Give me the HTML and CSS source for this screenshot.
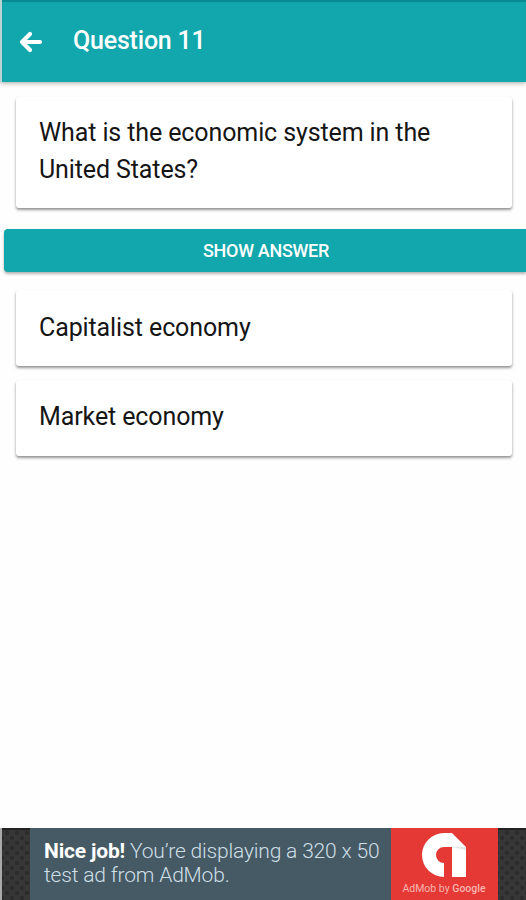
FILE: index.html
```html
<!DOCTYPE html>
<html lang="en">
<head>
    <meta charset="UTF-8">
    <meta name="viewport" content="width=device-width, initial-scale=1.0">
    <title>Question 11</title>
    <link rel="stylesheet" href="styles.css">
</head>
<body>
    <header class="toolbar">
        <a class="back" href="#" aria-label="Back">
            <svg width="24" height="24" viewBox="0 0 24 24">
                <path d="M11 4 L3 12 L11 20 M3.5 12 H21" fill="none" stroke="#fff" stroke-width="4.2" stroke-linecap="round" stroke-linejoin="round"/>
            </svg>
        </a>
        <h1>Question 11</h1>
    </header>

    <main>
        <div class="card question">What is the economic system in the United States?</div>
        <button class="show-answer" type="button">Show answer</button>
        <div class="card">Capitalist economy</div>
        <div class="card">Market economy</div>
    </main>

    <footer class="ad">
        <div class="ad-text">
            <p><b>Nice job!</b> You’re displaying a 320 x 50</p>
            <p>test ad from AdMob.</p>
        </div>
        <div class="ad-logo">
            <svg width="46" height="46" viewBox="0 0 46 46">
                <path d="M23 1 H31 L45 15 V45 H31 V15 H23 A8 8 0 0 0 23 31 V45 A22 22 0 0 1 23 1 Z" fill="#fff"/>
                <path d="M31 15 H45 V18 Z" fill="#e4e4e4"/>
            </svg>
            <span>AdMob by <b>Google</b></span>
        </div>
    </footer>
</body>
</html>
```

FILE: styles.css
```css
* {
    box-sizing: border-box;
}

body {
    display: flex;
    flex-direction: column;
    height: 100vh;
    margin: 0;
    overflow: hidden;
    background-color: #fefefe;
    font-family: Roboto, sans-serif;
    color: #151515;
}

.toolbar {
    display: flex;
    align-items: center;
    height: 82px;
    padding-left: 17px;
    border-left: 2px solid #bcd3d5;
    background-color: #12a7ac;
    box-shadow: inset 0 2px 1px #078a91, 0 1px 5px rgba(0, 0, 0, 0.35);
}

.back {
    display: flex;
    margin-top: 2px;
}

h1 {
    margin: 0 0 1px 30px;
    font-size: 25px;
    font-weight: 500;
    letter-spacing: -0.2px;
    color: #fff;
}

main {
    flex: 1;
}

.card {
    height: 76px;
    margin: 0 14px 14px 16px;
    padding: 18px 23px;
    border-radius: 3px;
    background-color: #fff;
    box-shadow: 0 2px 3px rgba(0, 0, 0, 0.4), 0 1px 2px rgba(0, 0, 0, 0.06);
    font-size: 25px;
    line-height: 37px;
    letter-spacing: -0.11px;
}

.question {
    height: 111px;
    margin-top: 15px;
    margin-bottom: 21px;
    padding-top: 17px;
}

.show-answer {
    display: block;
    width: calc(100% - 4px);
    height: 43px;
    margin: 0 0 18px 4px;
    padding: 0 0 0 2px;
    border: none;
    border-radius: 4px 0 0 4px;
    background-color: #12a7ac;
    box-shadow: 0 2px 3px rgba(0, 0, 0, 0.3);
    font-family: inherit;
    font-size: 18px;
    font-weight: 500;
    letter-spacing: -0.3px;
    text-transform: uppercase;
    color: #fff;
}

.show-answer + .card {
    padding-top: 19px;
}

.ad {
    display: flex;
    height: 72px;
    padding: 0 28px;
    border-left: 2px solid #aaa;
    background-color: #373737;
    background-image: radial-gradient(circle, #2c2c2c 1.8px, transparent 2.6px), radial-gradient(circle, #2c2c2c 1.8px, transparent 2.6px);
    background-position: 0 0, 5px 5px;
    background-size: 10px 10px;
    box-shadow: inset 0 2px 1px #222;
}

.ad-text {
    flex: 1;
    padding: 11px 0 0 14px;
    background-color: #455a64;
    font-size: 21px;
    font-weight: 300;
    line-height: 24px;
    letter-spacing: -0.18px;
    white-space: nowrap;
    color: #cfdfe8;
}

.ad-text p {
    margin: 0;
}

.ad-text b {
    font-weight: 700;
    color: #fff;
}

.ad-logo {
    display: flex;
    flex-direction: column;
    flex-shrink: 0;
    align-items: center;
    width: 107px;
    padding: 4px 1px 0 0;
    background-color: #e53935;
    font-size: 10.5px;
    line-height: 22px;
    color: #f8b5b2;
}

.ad-logo b {
    font-weight: 500;
}
```
